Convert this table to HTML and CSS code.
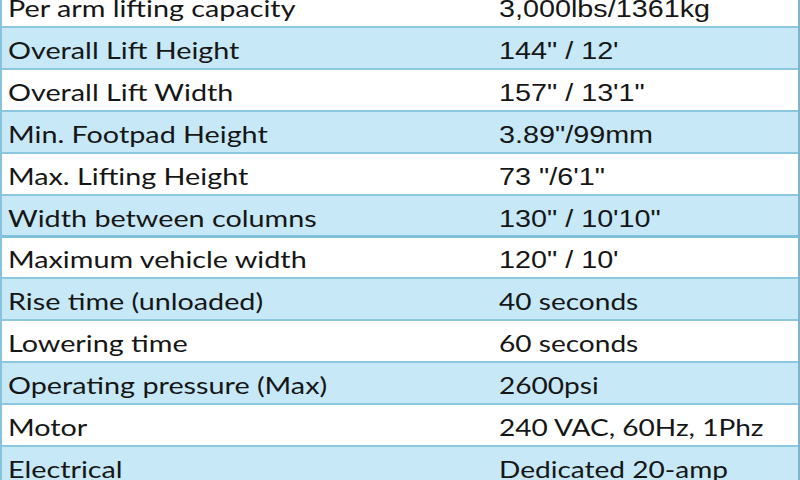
FILE: index.html
```html
<!DOCTYPE html>
<html>
<head>
<meta charset="utf-8">
<link rel="stylesheet" href="styles.css">
</head>
<body>
<div class="sheet">
  <div class="row"><span class="k"><span class="t">Per arm lifting capacity</span></span><span class="v arial"><span class="t">3,000lbs/1361kg</span></span></div>
  <div class="row alt"><span class="k"><span class="t">Overall Lift Height</span></span><span class="v arial"><span class="t">144" / 12'</span></span></div>
  <div class="row"><span class="k"><span class="t">Overall Lift Width</span></span><span class="v arial"><span class="t">157" / 13'1"</span></span></div>
  <div class="row alt"><span class="k"><span class="t">Min. Footpad Height</span></span><span class="v arial"><span class="t">3.89"/99mm</span></span></div>
  <div class="row"><span class="k"><span class="t">Max. Lifting Height</span></span><span class="v arial"><span class="t">73 "/6'1"</span></span></div>
  <div class="row alt thick"><span class="k"><span class="t">Width between columns</span></span><span class="v arial"><span class="t">130" / 10'10"</span></span></div>
  <div class="row after-thick"><span class="k"><span class="t">Maximum vehicle width</span></span><span class="v arial"><span class="t">120" / 10'</span></span></div>
  <div class="row alt"><span class="k"><span class="t">Rise time (unloaded)</span></span><span class="v"><span class="t">40 seconds</span></span></div>
  <div class="row"><span class="k"><span class="t">Lowering time</span></span><span class="v"><span class="t">60 seconds</span></span></div>
  <div class="row alt"><span class="k"><span class="t">Operating pressure (Max)</span></span><span class="v"><span class="t">2600psi</span></span></div>
  <div class="row"><span class="k"><span class="t">Motor</span></span><span class="v"><span class="t">240 VAC, 60Hz, 1Phz</span></span></div>
  <div class="row alt"><span class="k"><span class="t">Electrical</span></span><span class="v"><span class="t">Dedicated 20-amp</span></span></div>
</div>
</body>
</html>
```

FILE: styles.css
```css
html, body {
  margin: 0;
  padding: 0;
  background: #ffffff;
  overflow: hidden;
}
body {
  width: 800px;
  height: 480px;
}
.sheet {
  margin-top: -14px;
  width: 800px;
  box-sizing: border-box;
  border-left: 2px solid #86c3de;
  border-right: 2px solid #7fb4cc;
  font-family: Lato, "Open Sans", sans-serif;
  font-size: 23px;
  color: #161616;
}
.row {
  display: flex;
  align-items: baseline;
  height: 42px;
  box-sizing: border-box;
  padding-top: 6px;
  line-height: 33px;
  border-bottom: 2px solid #8cc7e0;
  background: #ffffff;
  white-space: nowrap;
  overflow: hidden;
}
.row.alt {
  background: #c6e8f7;
}
.row.thick {
  border-bottom: 3px solid #7fc0dc;
}
.row.after-thick {
  height: 41px;
  padding-top: 5px;
}
.k {
  width: 497px;
  padding-left: 6px;
  box-sizing: border-box;
  flex: none;
}
.v {
  flex: 1;
}
.arial {
  font-family: "Liberation Sans", Arial, sans-serif;
}
.t {
  display: inline-block;
  transform: scaleX(1.25);
  transform-origin: left center;
}
.v:not(.arial) .t {
  transform: scaleX(1.22);
}
```
